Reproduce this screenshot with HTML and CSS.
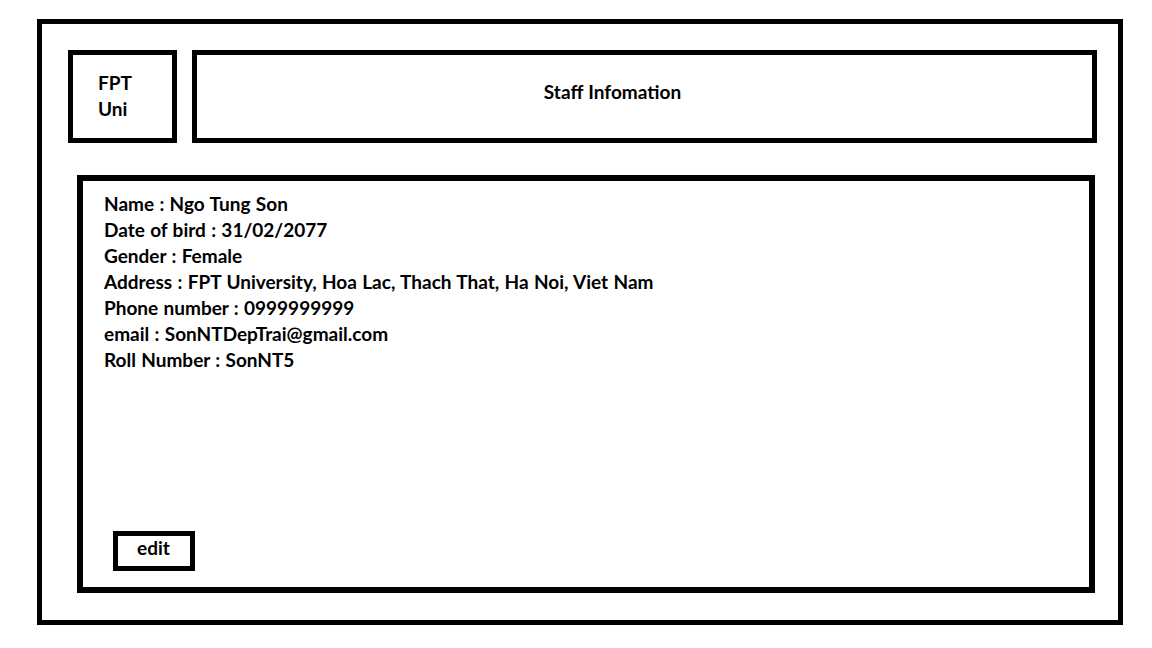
FILE: index.html
```html
<!DOCTYPE html>
<html>
<head>
<meta charset="utf-8">
<link rel="stylesheet" href="styles.css">
</head>
<body>
<div class="frame">
  <div class="header">
    <div class="logo">FPT<br>Uni</div>
    <div class="title">Staff Infomation</div>
  </div>
  <div class="card">
    <div class="info">
      <div>Name : Ngo Tung Son</div>
      <div>Date of bird : 31/02/2077</div>
      <div>Gender : Female</div>
      <div>Address : FPT University, Hoa Lac, Thach That, Ha Noi, Viet Nam</div>
      <div>Phone number : 0999999999</div>
      <div>email : SonNTDepTrai@gmail.com</div>
      <div>Roll Number : SonNT5</div>
    </div>
    <div class="edit">edit</div>
  </div>
</div>
</body>
</html>
```
FILE: styles.css
```css
* { box-sizing: border-box; }
html, body { margin: 0; padding: 0; background: #fff; }
body {
  font-family: Lato, "Open Sans", sans-serif;
  font-weight: 700;
  font-size: 19px;
  word-spacing: 0.7px;
  color: #000;
}
.frame {
  margin: 19px 0 0 37px;
  width: 1086px;
  height: 606px;
  border: 5px solid #000;
  padding: 26px 21px 0 26px;
}
.header {
  display: flex;
  gap: 15px;
  height: 93px;
}
.logo {
  width: 109px;
  height: 93px;
  border: 5px solid #000;
  padding: 15px 0 0 25px;
  line-height: 26px;
}
.title {
  flex: 1;
  border: 5px solid #000;
  display: flex;
  align-items: center;
  justify-content: center;
  padding: 0 64px 10px 0;
}
.card {
  margin: 32px 0 0 9px;
  width: 1018px;
  height: 418px;
  border: 6px solid #000;
  padding: 10px 0 0 21px;
  display: flex;
  flex-direction: column;
}
.info { line-height: 26px; }
.edit {
  margin: auto 0 16px 9px;
  width: 82px;
  height: 40px;
  border: 5px solid #000;
  padding: 0 0 0 19px;
  line-height: 24px;
}
```
